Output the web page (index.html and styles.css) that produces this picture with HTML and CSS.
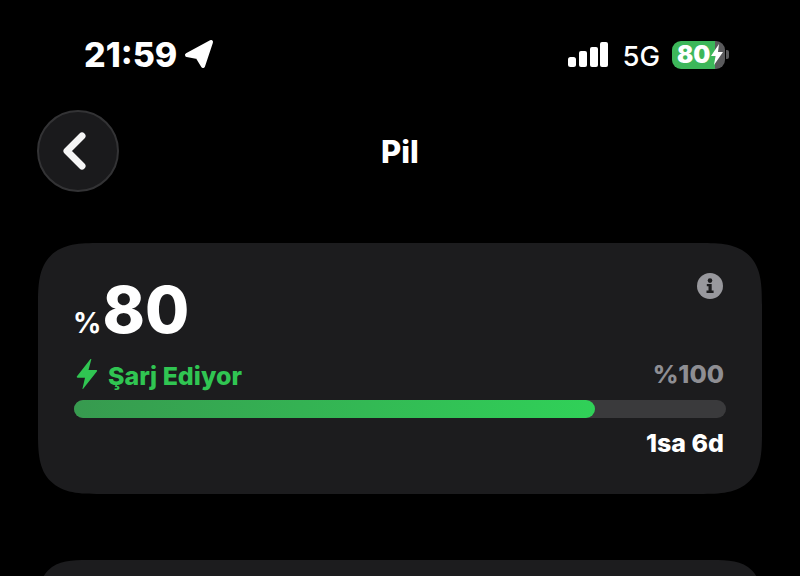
FILE: index.html
```html
<!DOCTYPE html>
<html lang="tr">
<head>
<meta charset="utf-8">
<title>Pil</title>
<link rel="stylesheet" href="styles.css">
</head>
<body>
<div class="screen">
  <header class="status">
    <div class="status-left">
      <span class="time">21:59</span>
      <svg class="loc" width="30" height="30" viewBox="0 0 30 30"><path d="M27 3 3 16 13.500 18 19 27Z" fill="#fff" stroke="#fff" stroke-width="4" stroke-linejoin="round"/></svg>
    </div>
    <div class="status-right">
      <svg class="signal" width="40" height="25" viewBox="0 0 40 25"><rect x="0" y="15" width="8" height="10" rx="2.500" fill="#fff"/><rect x="11" y="9" width="8" height="16" rx="2" fill="#fff"/><rect x="22" y="5" width="8" height="20" rx="2" fill="#fff"/><rect x="32" y="0" width="8" height="25" rx="2" fill="#fff"/></svg>
      <span class="net">5G</span>
      <div class="batt">
        <div class="batt-body"><span class="batt-num">80</span><svg class="batt-bolt" width="12" height="21" viewBox="0 0 12 21"><path d="M8 0 0 12h4.500L3 21l9-13H7Z" fill="#fff"/></svg></div>
        <span class="batt-cap"></span>
      </div>
    </div>
  </header>
  <nav class="nav">
    <button class="back" type="button"><svg width="28" height="38" viewBox="0 0 28 38"><path d="M21 4 6 19l15 15" fill="none" stroke="#f5f5f5" stroke-width="7" stroke-linecap="round" stroke-linejoin="round"/></svg></button>
    <h1 class="title">Pil</h1>
  </nav>
  <section class="card">
    <div class="card-top">
      <div class="level"><span class="pct">%</span><span class="num">80</span></div>
      <svg class="info" width="26" height="26" viewBox="0 0 26 26"><circle cx="13" cy="13" r="13" fill="#98989d"/><circle cx="13" cy="7.600" r="2.300" fill="#1c1c1e"/><path d="M9.800 11h4.900v6.600h1.900V20H9.500v-2.400h2V13.300H9.800Z" fill="#1c1c1e"/></svg>
    </div>
    <div class="row">
      <div class="charging">
        <svg width="22" height="30" viewBox="0 0 22 30"><path d="M14.500 0 1 17.300c-.5.700-.1 1.500.7 1.500H9L6.500 29.500c-.1.500.4.700.7.300L21 12.200c.4-.6 0-1.300-.7-1.300H12.500L15.300.4c.1-.5-.5-.7-.8-.4Z" fill="#30c552"/></svg>
        <span class="charging-text">Şarj Ediyor</span>
      </div>
      <span class="target">%100</span>
    </div>
    <div class="bar"><div class="fill" style="width:79.900%"></div></div>
    <div class="remain">1sa 6d</div>
  </section>
  <section class="card card-next"></section>
</div>
</body>
</html>
```

FILE: styles.css
```css
* { box-sizing: border-box; margin: 0; padding: 0; }
html, body { width: 800px; height: 576px; overflow: hidden; background: #000; }
body { font-family: Inter, "Liberation Sans", sans-serif; color: #fff; }
.screen { display: flex; flex-direction: column; height: 576px; overflow: hidden; padding: 0 38px; }
.status { height: 110px; flex: none; display: flex; justify-content: space-between; padding: 36px 33px 0 46px; align-items: flex-start; }
.status-left { display: flex; align-items: center; gap: 7px; height: 38px; }
.time { font-size: 34px; font-weight: 800; line-height: 38px; }
.loc { display: block; margin-top: -2px; }
.status-right { display: flex; align-items: center; height: 38px; margin-top: -1px; padding-top: 1px; }
.signal { display: block; margin-right: 14px; }
.net { font-size: 27.500px; font-weight: 500; line-height: 38px; margin-top: 2px; margin-right: 12px; }
.batt { display: flex; align-items: center; }
.batt-body { width: 53px; height: 28px; border-radius: 9px; background: linear-gradient(90deg, #3db75a 0 81%, #5a5a5c 81%); display: flex; align-items: center; padding-left: 5px; }
.batt-num { font-size: 24px; font-weight: 900; line-height: 27px; }
.batt-bolt { display: block; margin-left: 1px; }
.batt-cap { width: 3px; height: 9px; background: #5a5a5c; border-radius: 0 2px 2px 0; margin-left: 1px; }
.nav { height: 82px; flex: none; display: flex; align-items: center; position: relative; }
.back { width: 82px; height: 82px; margin-left: -1px; border-radius: 50%; background: #1a1a1c; border: 2px solid #333335; display: flex; align-items: center; justify-content: center; padding-right: 6px; }
.back svg { display: block; }
.title { position: absolute; left: 0; right: 0; top: 24px; text-align: center; font-size: 31px; font-weight: 800; line-height: 36px; }
.card { flex: none; background: #1c1c1e; border-radius: 62px; corner-shape: superellipse(1.6); height: 251px; margin-top: 51px; padding: 32px 36px 0 36px; }
.card-next { margin-top: 66px; height: 100px; }
.card-top { display: flex; justify-content: space-between; align-items: flex-start; height: 72px; }
.level { display: flex; align-items: baseline; line-height: 72px; margin-top: -1px; }
.pct { font-size: 28px; font-weight: 700; margin-left: -1px; }
.num { font-size: 64px; font-weight: 800; line-height: 72px; margin-left: 1px; }
.info { display: block; margin: -2px 3px 0 0; }
.row { display: flex; justify-content: space-between; align-items: center; height: 36px; margin-top: 10px; }
.charging { display: flex; align-items: center; gap: 10px; color: #30c552; font-size: 25px; font-weight: 800; padding-left: 2px; }
.charging svg { display: block; margin-top: -3px; }
.charging-text { margin-top: 2px; }
.target { color: #8e8e93; font-size: 25px; font-weight: 800; padding-right: 2px; margin-top: -2px; }
.bar { height: 18px; border-radius: 9px; background: #3a3a3c; margin-top: 7px; }
.fill { height: 100%; border-radius: 9px; background: linear-gradient(90deg, #379a4f, #30d158); }
.remain { text-align: right; font-size: 25px; font-weight: 800; line-height: 30px; margin-top: 10px; padding-right: 2px; }
```
